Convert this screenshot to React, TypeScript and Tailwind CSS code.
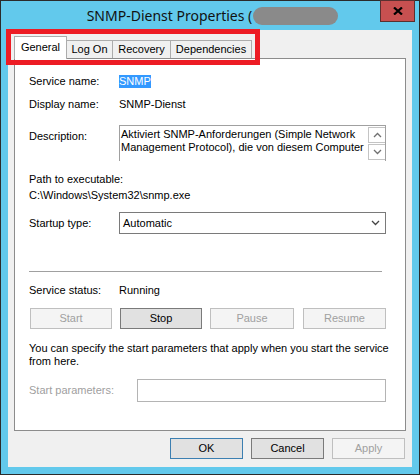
import React from "react";

const font = { fontFamily: '"Liberation Sans", Arial, sans-serif' };

const Chevron = ({ up = false, className = "" }: { up?: boolean; className?: string }) => (
  <svg width="9" height="6" viewBox="0 0 9 6" className={className}>
    <path d={up ? "M1 5 L4.5 1.5 L8 5" : "M1 1 L4.5 4.5 L8 1"} fill="none" stroke="currentColor" strokeWidth="1.3" />
  </svg>
);

const Btn = ({ label, disabled = false, className = "" }: { label: string; disabled?: boolean; className?: string }) => (
  <div
    className={
      "h-[21px] flex items-center justify-center border text-[11px] " +
      (disabled ? "bg-[#f4f4f4] border-[#bfbfbf] text-[#a0a0a0] " : "bg-[#e1e1e1] border-[#7a7a7a] text-black ") +
      className
    }
  >
    {label}
  </div>
);

const Tab = ({ label, active = false, className = "" }: { label: string; active?: boolean; className?: string }) => (
  <div
    className={
      "flex items-center justify-center border-x border-t border-[#acacac] text-[11px] " +
      (active ? "relative z-10 h-[23px] -mb-px bg-white pb-[2px]" : "h-[18px] bg-[#f0f0f0] -ml-px") +
      " " +
      className
    }
  >
    {label}
  </div>
);

export default function App() {
  return (
    <div className="relative w-[420px] h-[475px] bg-[#2b2b2b] p-px text-black" style={font}>
      <div className="relative h-full bg-[#62c9ec] flex flex-col">
        {/* title bar */}
        <div className="h-[29px] flex items-center justify-center pl-[5px]">
          <span className="text-[14px] text-[#111]" style={{ fontFamily: '"Noto Sans", "Open Sans", sans-serif' }}>
            SNMP-Dienst Properties (
          </span>
          <span className="ml-[1px] w-[85px] h-[18px] rounded-[9px] bg-[#8a8a8a] blur-[0.5px]" />
        </div>
        <div className="absolute top-[-1px] right-[4px] w-[35px] h-[22px] bg-[#c75050] border border-[#5a3030] flex items-center justify-center">
          <svg width="10" height="8" viewBox="0 0 10 8">
            <path d="M1 0.5 L9 7.5 M9 0.5 L1 7.5" stroke="#000" strokeWidth="2.2" />
          </svg>
        </div>

        {/* client area */}
        <div className="mx-[7px] h-[437px] bg-[#f0f0f0] flex flex-col">
          <div className="mt-[6px] mx-[6px] flex items-end h-[22px]">
            <Tab label="General" active className="w-[53px]" />
            <Tab label="Log On" className="w-[47px]" />
            <Tab label="Recovery" className="w-[59px]" />
            <Tab label="Dependencies" className="w-[82px]" />
          </div>

          <div className="mx-[6px] h-[373px] bg-white border border-[#8c8c8c] pl-[14px] flex flex-col text-[11px] leading-[13px]">
            <div className="mt-[16px] flex items-center h-[13px]">
              <span className="w-[90px]">Service name:</span>
              <span className="bg-[#3399ff] text-white h-[13px]">SNMP</span>
            </div>
            <div className="mt-[10px] flex items-center h-[13px]">
              <span className="w-[90px]">Display name:</span>
              <span>SNMP-Dienst</span>
            </div>
            <div className="mt-[14px] flex items-start">
              <span className="w-[90px] mt-[5px]">Description:</span>
              <div className="w-[267px] h-[36px] border-x border-t border-[#a0a0a0] flex">
                <div className="flex-1 pl-[1px] pt-[2px] overflow-hidden whitespace-nowrap">
                  <div>Aktiviert SNMP-Anforderungen (Simple Network</div>
                  <div>Management Protocol), die von diesem Computer</div>
                </div>
                <div className="w-[17px] flex flex-col gap-px pt-px">
                  <div className="h-[16px] border-l border-y border-[#c4c4c4] flex items-center justify-center text-[#707070]">
                    <Chevron up />
                  </div>
                  <div className="h-[16px] border-l border-y border-[#c4c4c4] flex items-center justify-center text-[#707070]">
                    <Chevron />
                  </div>
                </div>
              </div>
            </div>
            <div className="mt-[12px] h-[13px]">Path to executable:</div>
            <div className="mt-[3px] h-[13px]">C:\Windows\System32\snmp.exe</div>
            <div className="mt-[10px] flex items-center">
              <span className="w-[90px]">Startup type:</span>
              <div className="w-[267px] h-[22px] border border-[#7a7a7a] bg-white flex items-center justify-between pl-[3px] pr-[5px]">
                <span>Automatic</span>
                <Chevron className="text-[#444]" />
              </div>
            </div>
            <div className="mt-[37px] w-[353px] h-px bg-[#a0a0a0]" />
            <div className="mt-[12px] flex items-center h-[13px]">
              <span className="w-[90px]">Service status:</span>
              <span>Running</span>
            </div>
            <div className="mt-[11px] flex">
              <Btn label="Start" disabled className="ml-[1px] w-[82px]" />
              <Btn label="Stop" className="ml-[8px] w-[82px]" />
              <Btn label="Pause" disabled className="ml-[8px] w-[84px]" />
              <Btn label="Resume" disabled className="ml-[9px] w-[83px]" />
            </div>
            <div className="mt-[13px]">
              <div>You can specify the start parameters that apply when you start the service</div>
              <div>from here.</div>
            </div>
            <div className="mt-[11px] flex items-center">
              <span className="w-[108px] text-[#a0a0a0]">Start parameters:</span>
              <div className="w-[249px] h-[23px] border border-[#b4b4b4] bg-white" />
            </div>
          </div>

          <div className="mt-[7px] pr-[7px] flex justify-end gap-[8px]">
            <Btn label="OK" className="w-[73px] !border-[#3c7fb1]" />
            <Btn label="Cancel" className="w-[73px]" />
            <Btn label="Apply" disabled className="w-[73px]" />
          </div>
        </div>
      </div>

      {/* red annotation */}
      <div className="absolute left-[6px] top-[29px] w-[254px] h-[36px] border-[5px] border-[#ed1c24]" />
    </div>
  );
}
